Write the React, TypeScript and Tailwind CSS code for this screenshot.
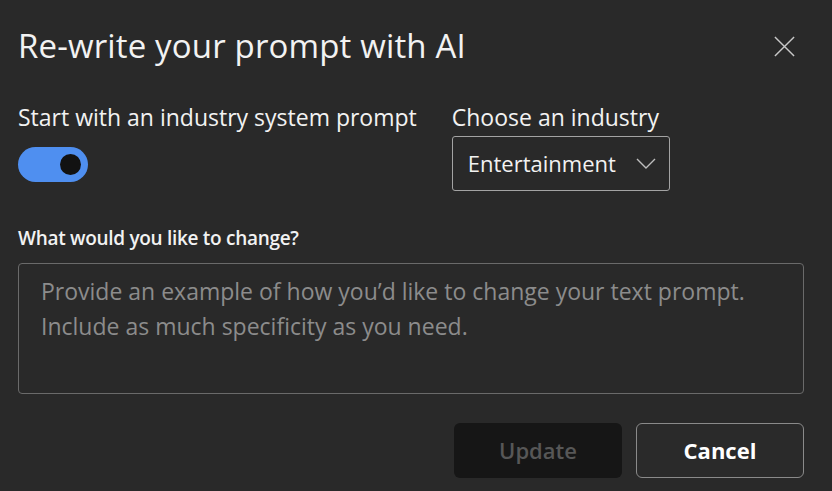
import { useState } from "react";

export default function App() {
  const [on, setOn] = useState(true);

  return (
    <div
      className="w-[832px] h-[491px] bg-[#292929] text-white pl-[18px] pr-[28px] pt-[26px]"
      style={{ fontFamily: '"Segoe UI", "Open Sans", sans-serif' }}
    >
      {/* header */}
      <div className="flex items-center justify-between">
        <h1 className="text-[33px] leading-[40px] font-normal tracking-[0.15px] text-[#f2f2f2]">
          Re-write your prompt with AI
        </h1>
        <button className="mr-[8px] text-[#c8c8c8]" aria-label="Close">
          <svg width="23" height="23" viewBox="0 0 24 24" fill="none">
            <path d="M2 2L22 22M22 2L2 22" stroke="currentColor" strokeWidth="1.5" />
          </svg>
        </button>
      </div>

      {/* industry row */}
      <div className="flex gap-[35px] mt-[36px]">
        <div className="flex flex-col">
          <label className="text-[23px] leading-[30px] text-[#f2f2f2]">
            Start with an industry system prompt
          </label>
          <button
            onClick={() => setOn(!on)}
            className={`mt-[15px] w-[70px] h-[35px] rounded-full flex items-center px-[7px] ${
              on ? "bg-[#4f8ff0] justify-end" : "bg-[#555] justify-start"
            }`}
          >
            <span className="w-[21px] h-[21px] rounded-full bg-[#121212]" />
          </button>
        </div>
        <div className="flex flex-col">
          <label className="text-[23px] leading-[30px] text-[#f2f2f2]">
            Choose an industry
          </label>
          <div className="mt-[4px] w-[218px] h-[55px] border border-[#a3a3a3] rounded-[3px] flex items-center justify-between pl-[15px] pr-[13px]">
            <span className="text-[22px] text-[#f2f2f2]">Entertainment</span>
            <svg width="20" height="12" viewBox="0 0 20 12" fill="none">
              <path d="M1 1L10 10L19 1" stroke="#bdbdbd" strokeWidth="1.4" />
            </svg>
          </div>
        </div>
      </div>

      {/* change textarea */}
      <div className="mt-[34px]">
        <div className="text-[19px] leading-[26px] font-semibold tracking-[-0.3px] text-[#f2f2f2]">
          What would you like to change?
        </div>
        <div className="mt-[12px] h-[131px] border border-[#6a6a6a] rounded-[4px] px-[22px] pt-[10px]">
          <p className="text-[23px] leading-[35px] text-[#8c8c8c]">
            Provide an example of how you’d like to change your text prompt.
            <br />
            Include as much specificity as you need.
          </p>
        </div>
      </div>

      {/* actions */}
      <div className="flex justify-end gap-[14px] mt-[29px]">
        <button className="w-[168px] h-[55px] rounded-[6px] bg-[#161616] text-[22px] font-semibold text-[#575757]">
          Update
        </button>
        <button className="w-[168px] h-[55px] rounded-[6px] border border-[#8a8a8a] bg-[#2a2a2a] text-[22px] font-bold text-white">
          Cancel
        </button>
      </div>
    </div>
  );
}
